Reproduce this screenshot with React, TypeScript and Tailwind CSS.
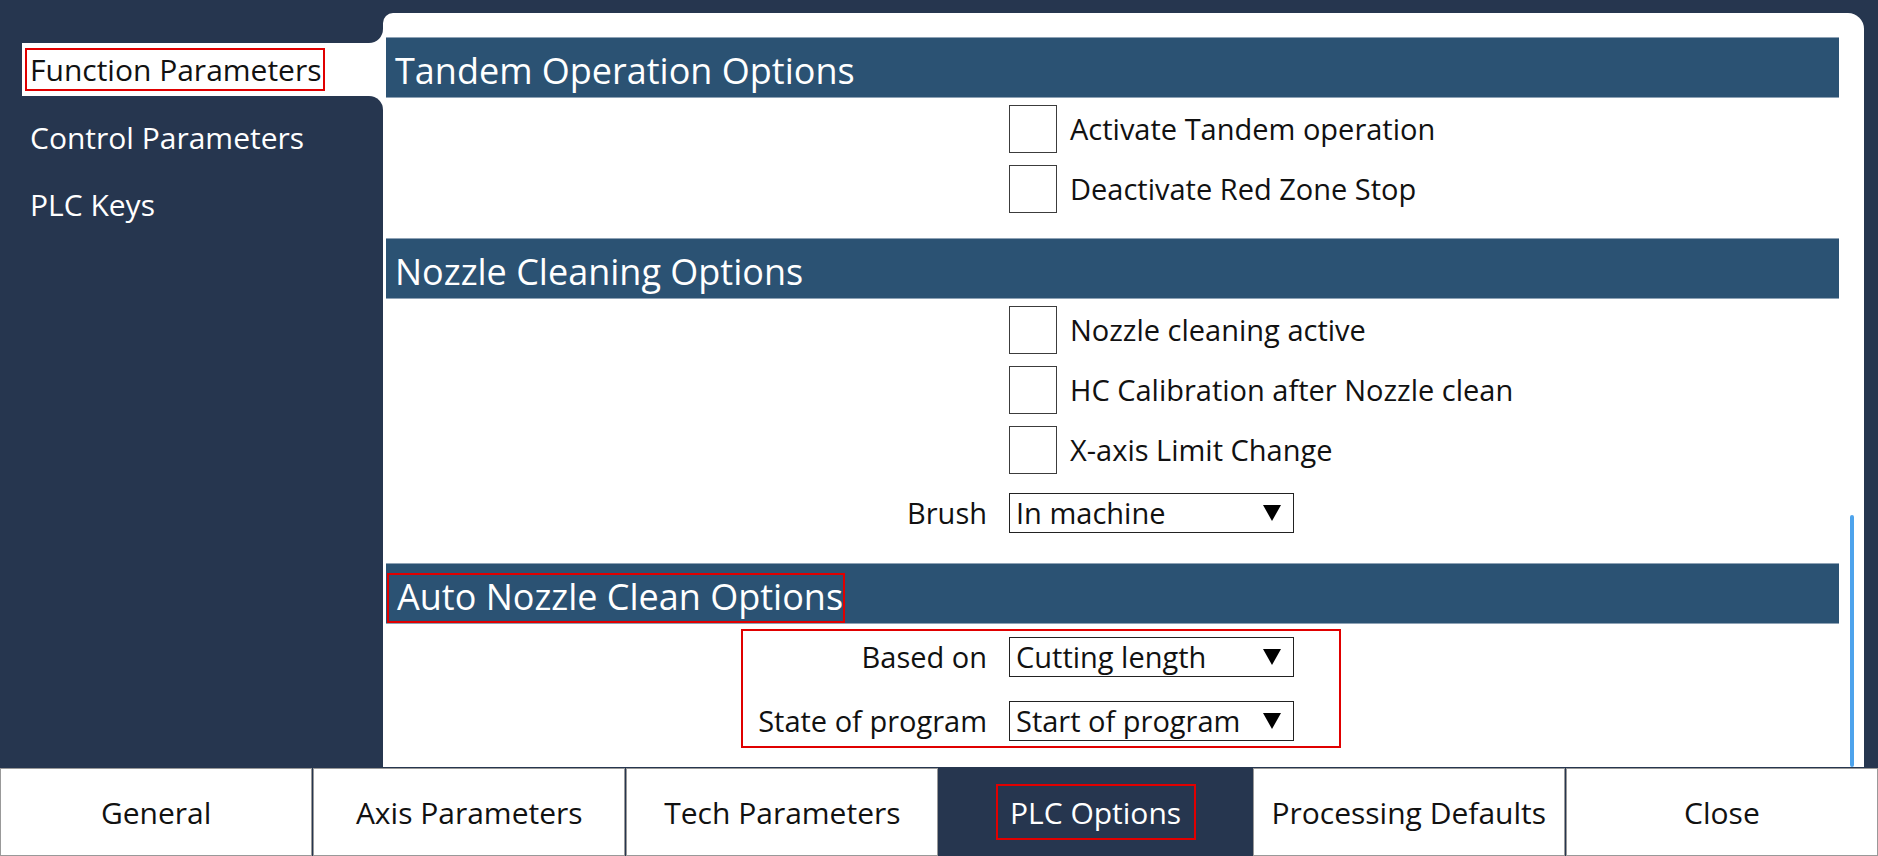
const font = { fontFamily: '"Open Sans", "Liberation Sans", sans-serif' }

const Header = ({ title, marked }: { title: string; marked?: boolean }) => (
   <div
      className={
         marked
            ? 'h-[61px] bg-[#2b5273] border-y border-[#8ea2b5] pt-[9px] pl-[1px]'
            : 'h-[61px] bg-[#2b5273] border-y border-[#8ea2b5] pt-[15px] pl-[9px]'
      }
   >
      {marked ? (
         <span className="inline-block h-[50px] border-2 border-[#e00000] pt-[4px] pl-[8px] pr-0 text-white text-[36px] leading-[36px]">
            {title}
         </span>
      ) : (
         <span className="block text-white text-[36px] leading-[36px]">{title}</span>
      )}
   </div>
)

const CheckRow = ({ label }: { label: string }) => (
   <div className="flex items-center h-[48px] pl-[623px]">
      <div className="w-[48px] h-[48px] border border-[#3c3c3c] bg-white" />
      <span className="ml-[13px] text-[29px] text-[#111]">{label}</span>
   </div>
)

const Arrow = () => (
   <svg width="18" height="16" viewBox="0 0 18 16">
      <polygon points="0,0 18,0 9,16" fill="#000" />
   </svg>
)

const SelectRow = ({ label, value }: { label: string; value: string }) => (
   <div className="flex items-center h-[40px]">
      <div className="w-[623px] pr-[22px] text-right text-[29px] text-[#111]">{label}</div>
      <div className="w-[285px] h-[40px] border border-[#222] flex items-center justify-between pl-[6px] pr-[12px]">
         <span className="text-[29px] text-[#111]">{value}</span>
         <Arrow />
      </div>
   </div>
)

const tabs = ['General', 'Axis Parameters', 'Tech Parameters', 'PLC Options', 'Processing Defaults', 'Close']

export default function App() {
   return (
      <div className="w-[1878px] h-[856px] bg-[#26364f] flex flex-col overflow-hidden" style={font}>
         <div className="flex h-[767px]">
            <div className="w-[383px] pt-[43px]">
               <div className="relative h-[53px] ml-[22px] bg-white flex items-center">
                  <span className="ml-[3px] border-2 border-[#e00000] h-[43px] flex items-center pl-[3px] pr-[1px] text-[30px] text-[#111]">
                     Function Parameters
                  </span>
                  <div className="absolute right-0 -top-[14px] w-[14px] h-[14px] bg-white">
                     <div className="w-full h-full bg-[#26364f] rounded-br-[14px]" />
                  </div>
                  <div className="absolute right-0 -bottom-[14px] w-[14px] h-[14px] bg-white">
                     <div className="w-full h-full bg-[#26364f] rounded-tr-[14px]" />
                  </div>
               </div>
               <div className="mt-[8px] pl-[30px] h-[67px] flex items-center text-[30px] text-white">
                  Control Parameters
               </div>
               <div className="pl-[30px] h-[67px] flex items-center text-[30px] text-white">PLC Keys</div>
            </div>

            <div className="mt-[13px] w-[1481px] bg-white rounded-tl-[10px] rounded-tr-[16px] flex">
               <div className="flex-1 pl-[3px] pt-[24px]">
                  <Header title="Tandem Operation Options" />
                  <div className="mt-[7px] flex flex-col gap-[12px]">
                     <CheckRow label="Activate Tandem operation" />
                     <CheckRow label="Deactivate Red Zone Stop" />
                  </div>

                  <div className="mt-[25px]">
                     <Header title="Nozzle Cleaning Options" />
                  </div>
                  <div className="mt-[7px] flex flex-col gap-[12px]">
                     <CheckRow label="Nozzle cleaning active" />
                     <CheckRow label="HC Calibration after Nozzle clean" />
                     <CheckRow label="X-axis Limit Change" />
                  </div>
                  <div className="mt-[19px]">
                     <SelectRow label="Brush" value="In machine" />
                  </div>

                  <div className="mt-[30px]">
                     <Header title="Auto Nozzle Clean Options" marked />
                  </div>
                  <div className="mt-[5px] ml-[355px] w-[600px] h-[119px] border-2 border-[#e00000] flex flex-col justify-center gap-[24px]">
                     <div className="-ml-[357px]">
                        <SelectRow label="Based on" value="Cutting length" />
                     </div>
                     <div className="-ml-[357px]">
                        <SelectRow label="State of program" value="Start of program" />
                     </div>
                  </div>
               </div>
               <div className="w-[25px] flex flex-col justify-end pl-[11px]">
                  <div className="w-[4px] h-[252px] rounded-full bg-[#4da3ec]" />
               </div>
            </div>
         </div>

         <div className="grid grid-cols-6 h-[89px] pt-[1px] gap-x-[1px]">
            {tabs.map((t) =>
               t === 'PLC Options' ? (
                  <div key={t} className="bg-[#26364f] flex items-center justify-center">
                     <span className="border-2 border-[#e00000] h-[56px] w-[200px] flex items-center justify-center text-[30px] text-white">
                        {t}
                     </span>
                  </div>
               ) : (
                  <div
                     key={t}
                     className="bg-white border border-[#999] flex items-center justify-center text-[30px] text-[#111]"
                  >
                     {t}
                  </div>
               )
            )}
         </div>
      </div>
   )
}
